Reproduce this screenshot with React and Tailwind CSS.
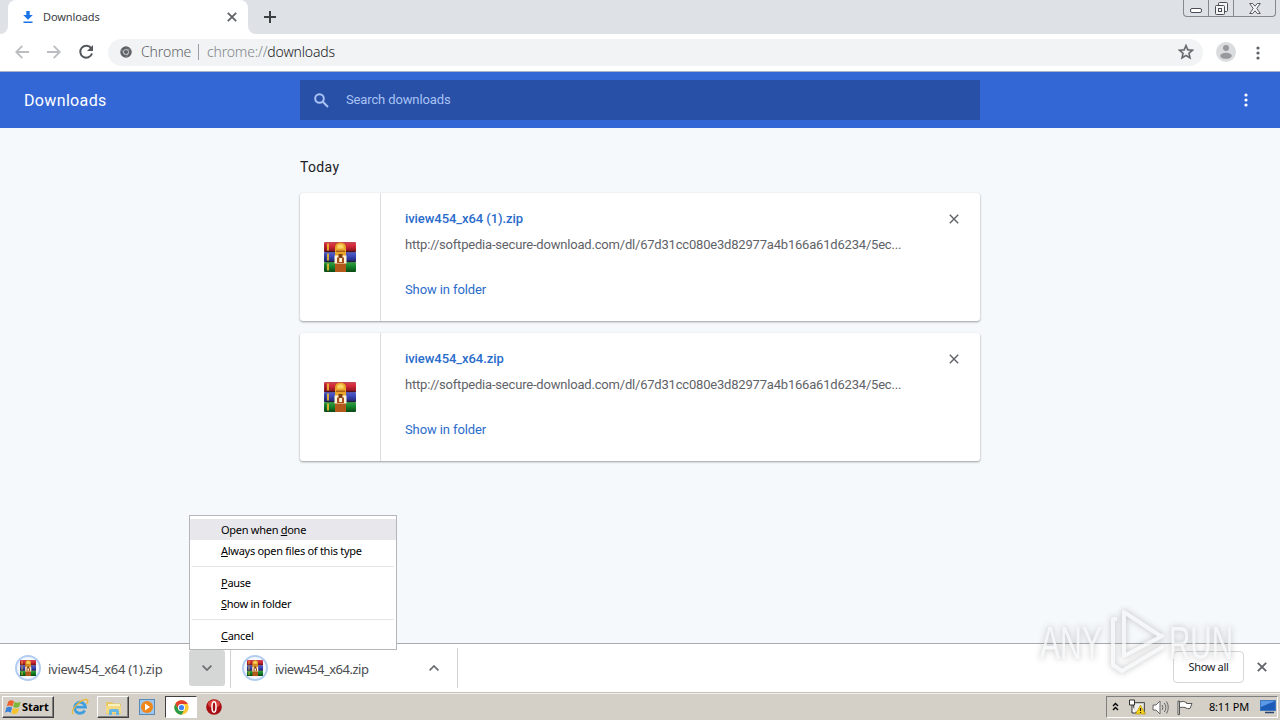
import React from "react";

const downloads = [
  { id: 1, name: "iview454_x64 (1).zip" },
  { id: 2, name: "iview454_x64.zip" },
];

const downloadUrl =
  "http://softpedia-secure-download.com/dl/67d31cc080e3d82977a4b166a61d6234/5ec...";

const WinRarIcon = ({ className }) => (
  <svg viewBox="0 0 32 30" className={className} preserveAspectRatio="none">
    <defs>
      <linearGradient id="bookRed" x1="0" y1="0" x2="0" y2="1">
        <stop offset="0" stopColor="#c34a55" />
        <stop offset="0.35" stopColor="#d92a3c" />
        <stop offset="1" stopColor="#7c1019" />
      </linearGradient>
      <linearGradient id="bookBlue" x1="0" y1="0" x2="0" y2="1">
        <stop offset="0" stopColor="#5a62b8" />
        <stop offset="0.35" stopColor="#3f4cc0" />
        <stop offset="1" stopColor="#1b2168" />
      </linearGradient>
      <linearGradient id="bookGreen" x1="0" y1="0" x2="0" y2="1">
        <stop offset="0" stopColor="#3f9a4a" />
        <stop offset="0.4" stopColor="#178a2c" />
        <stop offset="1" stopColor="#0a4715" />
      </linearGradient>
    </defs>
    <rect x="0" y="0" width="32" height="10" rx="1" fill="url(#bookRed)" />
    <rect x="0" y="10" width="32" height="10" rx="1" fill="url(#bookBlue)" />
    <rect x="0" y="20" width="32" height="10" rx="1" fill="url(#bookGreen)" />
    <path d="M0 9.6h32M0 19.6h32" stroke="#2b1420" strokeWidth="0.7" />
    <path d="M4 1.5v7M4 11.5v7M4 21.5v7" stroke="#e8b52e" strokeWidth="1.8" />
    <path d="M1.2 2v6M1.2 12v6M1.2 22v6" stroke="#000" strokeOpacity="0.3" />
    <rect x="11" y="2" width="11" height="28" fill="#b3591c" />
    <path d="M11 14V6.500Q11 .5 16.500.5T22 6.500V14z" fill="#eba62b" />
    <path d="M13.500 3.500q3-2.500 6 0v3h-6z" fill="#f9d568" />
    <path d="M12 9.200h9" stroke="#9c4d12" strokeWidth="1.200" />
    <rect x="10.500" y="13.500" width="12" height="8" fill="#fff3d8" />
    <path d="M13 21v-5.500h2.200V20h2.800v-4.500H20V21z" fill="#a84f17" />
    <path d="M14.500 12h4v4h-4z" fill="#7a3a12" />
  </svg>
);

const Dots = ({ className }) => (
  <svg viewBox="0 0 4 14" className={className} fill="currentColor">
    <circle cx="2" cy="2" r="1.600" />
    <circle cx="2" cy="7" r="1.600" />
    <circle cx="2" cy="12" r="1.600" />
  </svg>
);

const Cross = ({ className, width = 1.8 }) => (
  <svg viewBox="0 0 10 10" className={className} stroke="currentColor" strokeWidth={width}>
    <path d="M.8.8l8.400 8.400M9.200.8L.8 9.200" />
  </svg>
);

const ChromeLogo = ({ className, mono }) => (
  <svg viewBox="0 0 24 24" className={className}>
    <circle cx="12" cy="12" r="11.500" fill={mono ? "#5f6368" : "#fcc934"} />
    {!mono && (
      <>
        <path d="M2 6.300A11.500 11.500 0 0 1 22 6.300H12a5.700 5.700 0 0 0-5 8.500z" fill="#e3402f" />
        <path d="M2 6.300A11.500 11.500 0 0 0 12 23.500l5-8.600a5.700 5.700 0 0 1-10 0z" fill="#2a9c49" />
      </>
    )}
    {mono && (
      <path d="M12 6.500h10M7.200 14.800L2.200 6.200M16.800 14.800L11.800 23.300" stroke="#b4b7ba" strokeWidth="1" />
    )}
    <circle cx="12" cy="12" r="5.700" fill={mono ? "#d4d6d8" : "#fff"} />
    <circle cx="12" cy="12" r="4.200" fill={mono ? "#5f6368" : "#4285f4"} />
  </svg>
);

const TabStrip = () => (
  <div className="flex h-[34px] bg-[#dee1e6]">
    <div className="h-full w-2 bg-white">
      <div className="h-full rounded-br-lg bg-[#dee1e6]" />
    </div>
    <div className="flex w-60 items-center rounded-t-lg bg-white pl-[15px] pr-[11px]">
      <svg viewBox="0 0 10 12" className="h-3 w-2.5" fill="#1a73e8">
        <path d="M3.300 0h3.400v4H9.800L5 8.800.2 4h3.100zM.5 10.500h9V12h-9z" />
      </svg>
      <span className="ml-[10px] mt-px flex-1 text-[11px] tracking-[-0.1px] text-[#3c4043] font-['Noto_Sans',sans-serif]">
        Downloads
      </span>
      <Cross className="h-2.5 w-2.5 text-[#5f6368]" />
    </div>
    <div className="h-full w-2 bg-white">
      <div className="h-full rounded-bl-lg bg-[#dee1e6]" />
    </div>
    <div className="flex items-center pl-2">
      <svg viewBox="0 0 12 12" className="h-3 w-3" stroke="#3c4043" strokeWidth="2">
        <path d="M6 0v12M0 6h12" />
      </svg>
    </div>
    <div className="ml-auto mr-1 flex h-[17px] w-[93px] rounded-b border border-t-0 border-[#84888f]">
      <div className="flex w-[25px] items-end justify-center border-r border-[#84888f] pb-[3px]">
        <div className="h-[5px] w-3 rounded-[2px] border border-[#4a4d55] bg-white" />
      </div>
      <div className="flex w-[25px] items-center justify-center border-r border-[#84888f]">
        <svg viewBox="0 0 13 13" className="h-[13px] w-[13px]" fill="#f4f5f7" stroke="#4a4d55">
          <rect x="3.500" y=".5" width="9" height="9" rx="1" />
          <rect x=".5" y="3.500" width="9" height="9" rx="1" />
          <rect x="3.500" y="6.500" width="3" height="3" />
        </svg>
      </div>
      <div className="flex flex-1 items-center justify-center">
        <svg viewBox="0 0 12 11" className="h-[11px] w-3" fill="#f4f5f7" stroke="#4a4d55" strokeWidth=".9">
          <path d="M.7.5h3L6 3.200 8.300.5h3L7.800 5.500l3.500 5h-3L6 7.800l-2.300 2.700h-3l3.500-5z" />
        </svg>
      </div>
    </div>
  </div>
);

const Toolbar = () => (
  <div className="flex h-[38px] items-center border-b border-[#a9b4cc] bg-white pl-[15px]">
    <svg viewBox="0 0 14 14" className="mb-px h-3.5 w-3.5" fill="none" stroke="#bbbdc0" strokeWidth="1.800">
      <path d="M14 7H1.500M7.300.8L1.200 7l6.100 6.200" />
    </svg>
    <svg viewBox="0 0 14 14" className="mb-px ml-[18px] h-3.5 w-3.5" fill="none" stroke="#bbbdc0" strokeWidth="1.800">
      <path d="M0 7h12.500M6.700.8L12.800 7l-6.100 6.200" />
    </svg>
    <svg viewBox="0 0 16 16" className="mb-px ml-[17px] h-4 w-4" fill="none" stroke="#54575b" strokeWidth="2">
      <path d="M13.200 4.200A6 6 0 1 0 14 9.500" />
      <path d="M15 1v6H9z" fill="#54575b" stroke="none" />
    </svg>
    <div className="mb-[1px] ml-[14px] flex h-[27px] w-[1095px] items-center rounded-full bg-[#f1f3f4] pl-[12px] pr-[9px]">
      <ChromeLogo mono className="h-3 w-3" />
      <div className="mb-[2px] ml-[9px] flex items-center text-[14px] font-light font-['Noto_Sans',sans-serif]">
        <span className="w-[49px] whitespace-nowrap tracking-[-0.1px] text-[#5f6368]">Chrome</span>
        <span className="ml-2 mt-px h-4 w-px bg-[#9aa0a6]" />
        <span className="ml-2 whitespace-nowrap tracking-[-0.17px] text-[#80868b]">
          chrome://<span className="text-[#202124]">downloads</span>
        </span>
      </div>
      <svg viewBox="2 2 20 20" className="ml-auto h-4 w-4" fill="#5f6368" stroke="#5f6368" strokeWidth=".4">
        <path d="M22 9.240l-7.190-.62L12 2 9.190 8.630 2 9.240l5.460 4.730L5.820 21 12 17.270 18.180 21l-1.630-7.030L22 9.240zM12 15.400l-3.760 2.270 1-4.280-3.320-2.880 4.380-.38L12 6.100l1.710 4.040 4.380.38-3.320 2.880 1 4.280L12 15.400z" />
      </svg>
    </div>
    <svg viewBox="0 0 20 20" className="mb-px ml-[13px] h-5 w-5">
      <circle cx="10" cy="10" r="10" fill="#dadcde" />
      <circle cx="10" cy="6" r="3" fill="#97999c" />
      <ellipse cx="10" cy="13.800" rx="5.800" ry="3" fill="#97999c" />
    </svg>
    <Dots className="ml-[20px] h-3.5 w-1 text-[#5f6368]" />
  </div>
);

const PageHeader = () => (
  <div className="flex h-14 items-center bg-[#3367d6]">
    <h1 className="w-[300px] pl-6 pt-0.5 text-[16px] tracking-[0.35px] text-white">Downloads</h1>
    <div className="flex h-10 w-[680px] items-center bg-[#2850a7] pl-[14px]">
      <svg viewBox="0 0 15 15" className="h-[15px] w-[15px]" fill="none" stroke="#a9c3f5" strokeWidth="2">
        <circle cx="5.500" cy="5.500" r="4.300" />
        <path d="M8.800 8.800l5.200 5.200" />
      </svg>
      <span className="ml-[17px] text-[13px] tracking-[-0.13px] text-[#a9c3f5]">Search downloads</span>
    </div>
    <Dots className="ml-[264px] h-3.5 w-1 text-white" />
  </div>
);

const DownloadCard = ({ name }) => (
  <div className="mb-3 flex h-32 w-[680px] rounded-[3px] bg-white shadow-[0_1px_2px_rgba(60,64,67,0.4),0_1px_3px_rgba(60,64,67,0.12)]">
    <div className="flex w-[81px] items-center justify-center border-r border-[#dadce0]">
      <WinRarIcon className="h-[30px] w-8" />
    </div>
    <div className="flex-1 pl-6 pt-4 text-[13px]">
      <p className="h-[26px] leading-5 font-medium tracking-[-0.07px] text-[#2a6ccb]">{name}</p>
      <p className="h-[45px] whitespace-nowrap leading-5 tracking-[-0.195px] text-[#5f6368]">{downloadUrl}</p>
      <p className="leading-5 tracking-[-0.1px] text-[#2a6ccb]">Show in folder</p>
    </div>
    <div className="pr-[21px] pt-[21px]">
      <Cross width={1.4} className="h-2.5 w-2.5 text-[#5f6368]" />
    </div>
  </div>
);

const ShelfIcon = () => (
  <div className="mb-px flex h-[26px] w-[26px] items-center justify-center rounded-full border-2 border-[#b2ccf1] bg-[#f4f8fd]">
    <WinRarIcon className="h-4 w-4" />
  </div>
);

const DownloadShelf = () => (
  <div className="flex h-[49px] border-t border-[#a8abb0] bg-white text-[13px] text-[#4a4d51] font-['Noto_Sans',sans-serif]">
    <div className="flex w-[189px] items-center pl-[15px]">
      <ShelfIcon />
      <span className="ml-[7px] mt-[3px] whitespace-nowrap tracking-[-0.28px]">iview454_x64 (1).zip</span>
    </div>
    <div className="mt-[6px] flex h-9 w-9 items-center justify-center rounded-[3px] bg-[#d5d7d7]">
      <svg viewBox="0 0 10 6" className="h-1.5 w-2.5" fill="none" stroke="#686b6f" strokeWidth="1.700">
        <path d="M.6.6L5 5 9.400.6" />
      </svg>
    </div>
    <div className="ml-[5px] mt-1 flex h-10 w-[228px] items-center border-x border-[#cfd1d3] pl-[11px] pr-[18px]">
      <ShelfIcon />
      <span className="ml-[7px] mt-[3px] whitespace-nowrap tracking-[-0.5px]">iview454_x64.zip</span>
      <svg viewBox="0 0 10 6" className="ml-auto h-1.5 w-2.5" fill="none" stroke="#686b6f" strokeWidth="1.700">
        <path d="M.6 5.400L5 1l4.400 4.400" />
      </svg>
    </div>
    <div className="mb-[2px] ml-auto mr-[13px] flex items-center">
      <button className="flex h-8 w-[71px] items-center justify-center rounded border border-[#d4d6d9] text-[11px] tracking-[-0.35px] text-[#202124]">
        Show all
      </button>
      <Cross className="ml-[13px] h-2.5 w-2.5 text-[#5f6368]" />
    </div>
  </div>
);

const MenuItem = ({ before, letter, after, active }) => (
  <div className={`flex h-[21px] items-center whitespace-pre pl-[31px] pt-0.5 ${active ? "bg-[#e8e8ec]" : ""}`}>
    {before}
    <span className="underline">{letter}</span>
    {after}
  </div>
);

const ContextMenu = () => (
  <div className="absolute left-[189px] top-[515px] h-[135px] w-[208px] border border-[#b4b6ba] bg-white pt-[3px] text-[11px] tracking-[-0.28px] text-black font-['Noto_Sans',sans-serif]">
    <MenuItem before="Open when " letter="d" after="one" active />
    <MenuItem letter="A" after="lways open files of this type" />
    <div className="mx-0.5 my-[5px] h-px bg-[#e4e6e8]" />
    <MenuItem letter="P" after="ause" />
    <MenuItem letter="S" after="how in folder" />
    <div className="mx-0.5 my-[5px] h-px bg-[#e4e6e8]" />
    <MenuItem letter="C" after="ancel" />
  </div>
);

const Watermark = () => (
  <svg
    viewBox="0 0 210 76"
    className="pointer-events-none absolute left-[1032px] top-[602px] h-[76px] w-[210px] overflow-visible opacity-75 drop-shadow-[0_0_3px_rgba(80,80,80,0.5)]"
  >
    <g fill="#f5f6f7" fontFamily="Liberation Sans, sans-serif" fontSize="47">
      <text x="8" y="57" textLength="62" lengthAdjust="spacingAndGlyphs">ANY</text>
      <text x="137" y="57" textLength="64" lengthAdjust="spacingAndGlyphs">RUN</text>
    </g>
    <g fill="none" stroke="#f5f6f7" strokeWidth="4" strokeLinejoin="round">
      <path d="M130 35L92 10v44l40-21" />
      <path d="M85 17h-4v46l9 6 42-25" />
    </g>
  </svg>
);

const Taskbar = () => (
  <div className="flex h-7 items-center border-t border-[#c5c1bb] bg-[#d4d0c8] pl-[2px] pt-px shadow-[inset_0_1px_0_#f4f2ee]">
    <div className="flex h-[22px] w-[52px] items-center border border-[#404040] border-l-white border-t-white pl-0.5 shadow-[inset_-1px_-1px_0_#808080]">
      <svg viewBox="0 0 15 14" className="h-4 w-[17px]">
        <path d="M3 2q2.500-2 5 0L6.500 6.500q-2.500-1.500-5 0z" fill="#ec6330" />
        <path d="M8.500 2.300q2.500 1.700 5.500 0l-1.500 4.500q-2.800 1.600-5.300 0z" fill="#7cb83a" />
        <path d="M1.300 7.500q2.500-1.600 5 0L5 12q-2.500-1.500-5 0z" fill="#3b83d8" />
        <path d="M7 7.800q2.500 1.700 5.500 0L11 12.400q-2.900 1.500-5.300 0z" fill="#f6c22d" />
      </svg>
      <span className="text-[11px] font-bold tracking-[-0.1px] text-black font-['Noto_Sans',sans-serif]">Start</span>
    </div>
    <svg viewBox="0 0 18 18" className="ml-[17px] h-[18px] w-[18px]" fill="none">
      <path d="M13.800 12.500A5.500 5.500 0 1 1 14.500 9.200H4.500" stroke="#3f9fde" strokeWidth="2.800" />
      <path d="M2 16C-1 13 9 1 15.500 1.500 18 2 16.500 5 15.500 6" stroke="#e9b73a" strokeWidth="1.300" />
    </svg>
    <div className="ml-2 flex h-[22px] w-8 items-center justify-center border border-[#404040] border-l-white border-t-white shadow-[inset_-1px_-1px_0_#808080]">
      <svg viewBox="0 0 17 17" className="h-[17px] w-[17px]">
        <path d="M1 3h6l1.500 1.500H16V15H1z" fill="#e7c765" />
        <path d="M3 5h12v7H3z" fill="#f9f0bb" />
        <path d="M1 7h15v7H1z" fill="#f3da83" />
        <path d="M4 16v-4q0-2 2-2h6q2 0 2 2v4h-3v-3H7v3z" fill="#69b8e4" />
      </svg>
    </div>
    <svg viewBox="0 0 16 16" className="ml-[10px] h-4 w-4">
      <rect x=".5" y=".5" width="15" height="15" fill="#9fc7e9" stroke="#5989b8" />
      <circle cx="8" cy="8" r="6" fill="#f08519" />
      <path d="M6 4.500l5 3.500-5 3.500z" fill="#fff" />
    </svg>
    <div className="ml-[10px] flex h-[22px] w-8 items-center justify-center border border-white border-l-[#404040] border-t-[#404040] bg-white">
      <ChromeLogo className="h-[15px] w-[15px]" />
    </div>
    <svg viewBox="0 0 16 16" className="ml-[9px] h-4 w-4">
      <circle cx="8" cy="8" r="7.800" fill="#a70e13" />
      <ellipse cx="8" cy="5" rx="6" ry="4" fill="#d9423c" />
      <ellipse cx="8" cy="8" rx="2" ry="5.200" fill="#a70e13" stroke="#fff" strokeWidth="1.500" />
    </svg>
    <div className="ml-auto mr-0.5 flex h-[22px] w-[172px] items-center border border-white border-l-[#808080] border-t-[#808080] pl-[5px]">
      <svg viewBox="0 0 7 9" className="mb-0.5 h-[9px] w-[7px]" fill="none" stroke="#000" strokeWidth="1.400">
        <path d="M1 4l2.500-2.500L6 4M1 8l2.500-2.500L6 8" />
      </svg>
      <svg viewBox="0 0 17 16" className="ml-[10px] h-4 w-[17px]">
        <path d="M4.500 3.500h11v10h-11z" fill="#c9c9c4" stroke="#555" />
        <path d="M6 5h8v7H6z" fill="#eee" />
        <path d="M.5 1h5v5h-5zM3 6v8h4" fill="#fff" stroke="#333" />
        <path d="M11.500 6l5 9h-10z" fill="#f6d21d" stroke="#b28c00" strokeWidth=".6" />
        <path d="M11.500 9v3M11.500 13v1" stroke="#222" strokeWidth="1.200" />
      </svg>
      <svg viewBox="0 0 17 15" className="ml-[6px] h-[15px] w-[17px]" fill="none" stroke="#666">
        <path d="M1 5h3l4-4v13l-4-4H1z" fill="#fff" />
        <path d="M10 5q2 2.500 0 5M12.300 3q3.200 4.500 0 9M14.500 1.500q3.500 6 0 12" />
      </svg>
      <svg viewBox="0 0 16 15" className="ml-[8px] h-[15px] w-4" fill="#fff" stroke="#555">
        <path d="M1 1h1.500v13.500H1zM2.500 2q4-1.500 7 .5v1h5.500L13 8.500q-3 .8-5-1-2.500-.5-5.500 0z" />
      </svg>
      <span className="ml-[16px] whitespace-nowrap text-[11px] tracking-[-0.2px] text-black font-['Noto_Sans',sans-serif]">8:11 PM</span>
      <svg viewBox="0 0 16 14" className="ml-auto mr-px h-3.5 w-4">
        <rect x=".5" y=".5" width="15" height="10" fill="#1c5cb8" stroke="#3d77bd" />
        <path d="M1 1h14L1 7z" fill="#5898e6" />
        <path d="M5 12.500h9" stroke="#27456e" strokeWidth="1.500" />
      </svg>
    </div>
  </div>
);

const App = () => {
  return (
    <div className="relative flex h-[720px] w-[1280px] flex-col overflow-hidden bg-white font-['Roboto',sans-serif]">
      <TabStrip />
      <Toolbar />
      <PageHeader />
      <main className="h-[515px] bg-[#f6f9fc] pl-[300px] pt-[29px]">
        <h2 className="mb-4 text-[14px] leading-5 tracking-[0.35px] text-[#202124]">Today</h2>
        {downloads.map((item) => (
          <DownloadCard key={item.id} name={item.name} />
        ))}
      </main>
      <DownloadShelf />
      <Taskbar />
      <ContextMenu />
      <Watermark />
    </div>
  );
};

export default App;
